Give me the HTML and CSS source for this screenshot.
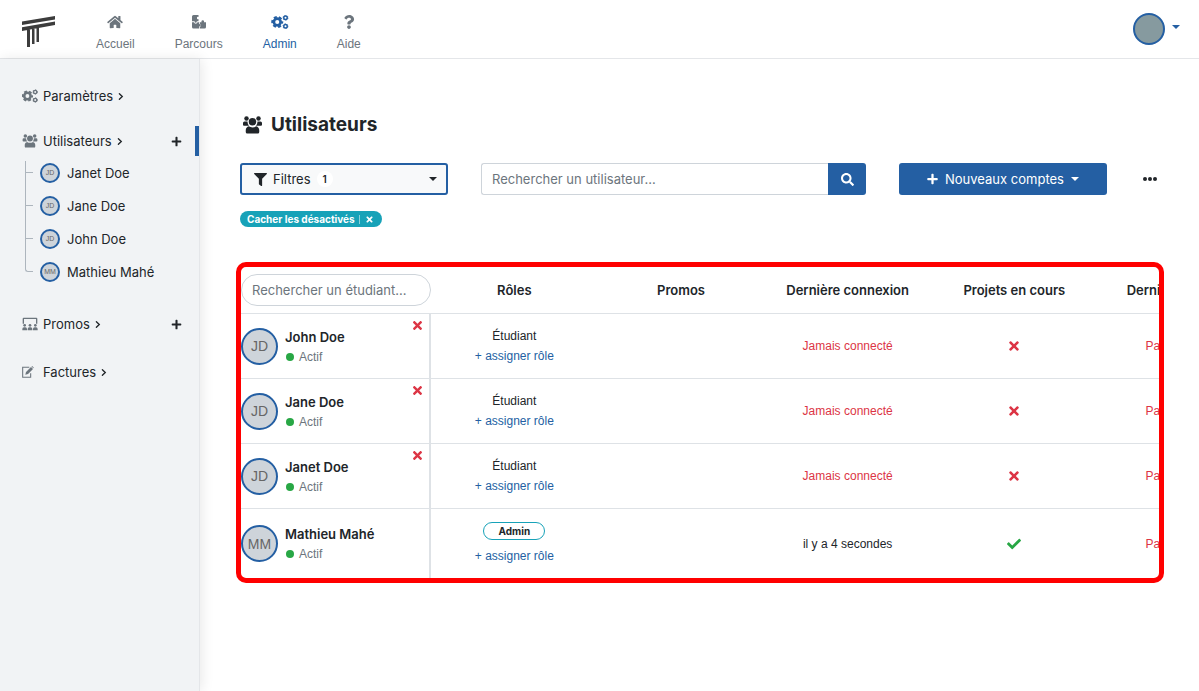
FILE: index.html
```html
<!DOCTYPE html>
<html lang="fr">
<head>
<meta charset="utf-8">
<meta name="viewport" content="width=device-width, initial-scale=1">
<title>Utilisateurs</title>
<link rel="stylesheet" href="styles.css">
</head>
<body>
<svg class="sprite" aria-hidden="true">
  <symbol id="home" viewBox="0 0 576 512"><path d="M280.37 148.26L96 300.11V464a16 16 0 0 0 16 16l112.06-.29a16 16 0 0 0 15.92-16V368a16 16 0 0 1 16-16h64a16 16 0 0 1 16 16v95.64a16 16 0 0 0 16 16.05L464 480a16 16 0 0 0 16-16V300L295.67 148.26a12.19 12.19 0 0 0-15.3 0zM571.6 251.47L488 182.56V44.05a12 12 0 0 0-12-12h-56a12 12 0 0 0-12 12v72.61L318.47 43a48 48 0 0 0-61 0L4.34 251.47a12 12 0 0 0-1.6 16.9l25.5 31A12 12 0 0 0 45.15 301l235.22-193.74a12.19 12.19 0 0 1 15.3 0L530.9 301a12 12 0 0 0 16.9-1.6l25.5-31a12 12 0 0 0-1.7-16.93z"/></symbol>
  <symbol id="puzzle" viewBox="0 0 28 28"><path d="M3 0h10v4a2.200 2.200 0 1 0 0 4v4.500H9.500a2.200 2.200 0 1 1-4.200 0H0V3a3 3 0 0 1 3-3z"/><path d="M0 14.500h4a3.600 3.600 0 0 0 7 0h3v4a2.300 2.300 0 1 1 0 4V27H3a3 3 0 0 1-3-3z"/><path d="M15.500 14.500h3.700a2.700 2.700 0 1 1 4.600 0H28V24a3 3 0 0 1-3 3h-9.500v-3a3.600 3.600 0 0 0 0-6.500z"/></symbol>
  <symbol id="cogs" viewBox="0 0 34 28"><g fill="none" stroke="currentColor"><circle cx="11.500" cy="14" r="6.800" stroke-width="5.400"/><circle cx="11.500" cy="14" r="10" stroke-width="4" stroke-dasharray="6 4.470" stroke-dashoffset="3"/><circle cx="28" cy="5.500" r="3.500" stroke-width="3"/><circle cx="28" cy="5.500" r="5" stroke-width="1.500" stroke-dasharray="2.600 2.630"/><circle cx="28" cy="22.500" r="3.500" stroke-width="3"/><circle cx="28" cy="22.500" r="5" stroke-width="1.500" stroke-dasharray="2.600 2.630"/></g></symbol>
  <symbol id="question" viewBox="0 0 384 512"><path d="M202.021 0C122.202 0 70.503 32.703 29.914 91.026c-7.363 10.58-5.093 25.086 5.178 32.874l43.138 32.709c10.373 7.865 25.132 6.026 33.253-4.148 25.049-31.381 43.63-49.449 82.757-49.449 30.764 0 68.816 19.799 68.816 49.631 0 22.552-18.617 34.134-48.993 51.164-35.423 19.86-82.299 44.576-82.299 106.405V320c0 13.255 10.745 24 24 24h72.471c13.255 0 24-10.745 24-24v-5.773c0-42.86 125.268-44.645 125.268-160.627C377.504 66.256 286.902 0 202.021 0zM192 373.459c-38.196 0-69.271 31.075-69.271 69.271 0 38.195 31.075 69.27 69.271 69.27s69.271-31.075 69.271-69.271-31.075-69.27-69.271-69.27z"/></symbol>
  <symbol id="times" viewBox="0 0 352 512"><path d="M242.72 256l100.07-100.07c12.28-12.28 12.28-32.19 0-44.48l-22.24-22.24c-12.28-12.28-32.19-12.28-44.48 0L176 189.28 75.93 89.21c-12.28-12.28-32.19-12.28-44.48 0L9.21 111.45c-12.28 12.28-12.28 32.19 0 44.48L109.28 256 9.21 356.07c-12.28 12.28-12.28 32.19 0 44.48l22.24 22.24c12.28 12.28 32.2 12.28 44.48 0L176 322.72l100.07 100.07c12.28 12.28 32.2 12.28 44.48 0l22.24-22.24c12.28-12.28 12.28-32.19 0-44.48L242.72 256z"/></symbol>
  <symbol id="check" viewBox="0 0 512 512"><path d="M173.898 439.404l-166.4-166.4c-9.997-9.997-9.997-26.206 0-36.204l36.203-36.204c9.997-9.998 26.207-9.998 36.204 0L192 312.69 432.095 72.596c9.997-9.997 26.207-9.997 36.204 0l36.203 36.204c9.997 9.997 9.997 26.206 0 36.204l-294.4 294.401c-9.998 9.997-26.207 9.997-36.204-.001z"/></symbol>
  <symbol id="plus" viewBox="0 0 448 512"><path d="M416 208H272V64c0-17.67-14.33-32-32-32h-32c-17.67 0-32 14.33-32 32v144H32c-17.67 0-32 14.33-32 32v32c0 17.67 14.33 32 32 32h144v144c0 17.67 14.33 32 32 32h32c17.67 0 32-14.33 32-32V304h144c17.67 0 32-14.33 32-32v-32c0-17.67-14.33-32-32-32z"/></symbol>
  <symbol id="search" viewBox="0 0 512 512"><path d="M505 442.7L405.3 343c-4.5-4.5-10.6-7-17-7H372c27.6-35.3 44-79.7 44-128C416 93.1 322.9 0 208 0S0 93.1 0 208s93.1 208 208 208c48.3 0 92.7-16.4 128-44v16.3c0 6.4 2.5 12.5 7 17l99.7 99.7c9.4 9.4 24.6 9.4 33.9 0l28.3-28.3c9.4-9.4 9.4-24.6.1-34zM208 336c-70.7 0-128-57.2-128-128 0-70.7 57.2-128 128-128 70.7 0 128 57.2 128 128 0 70.7-57.2 128-128 128z"/></symbol>
  <symbol id="filter" viewBox="0 0 512 512"><path d="M487.976 0H24.028C2.71 0-8.047 25.866 7.058 40.971L192 225.941V432c0 7.831 3.821 15.17 10.237 19.662l80 55.98C298.02 518.69 320 507.493 320 487.98V225.941l184.947-184.97C520.021 25.896 509.338 0 487.976 0z"/></symbol>
  <symbol id="users" viewBox="0 0 38 36"><circle cx="7" cy="5" r="4.500"/><circle cx="31" cy="5" r="4.500"/><circle cx="19" cy="11.500" r="7.500"/><path d="M3 11h6a12 12 0 0 0 3 8.500H2a2 2 0 0 1-2-2V14a3 3 0 0 1 3-3zM35 11h-6a12 12 0 0 1-3 8.500h10a2 2 0 0 0 2-2V14a3 3 0 0 0-3-3zM11.500 20.500c4 3 11 3 15 0 3.500 1 6 4 6 8V32a3 3 0 0 1-3 3h-21a3 3 0 0 1-3-3v-3.500c0-4 2.500-7 6-8z"/></symbol>
  <symbol id="class" viewBox="0 0 48 38"><path d="M2 18V3a3 3 0 0 1 3-3h38a3 3 0 0 1 3 3v15h-4V4H6v14z"/><circle cx="8" cy="23" r="4"/><circle cx="24" cy="23" r="4"/><circle cx="40" cy="23" r="4"/><path d="M1 38v-4a5 5 0 0 1 5-5h4a5 5 0 0 1 5 5v4zM17 38v-4a5 5 0 0 1 5-5h4a5 5 0 0 1 5 5v4zM33 38v-4a5 5 0 0 1 5-5h4a5 5 0 0 1 5 5v4z"/></symbol>
  <symbol id="edit" viewBox="0 0 36 36"><path d="M22 4H2v30h24V22" fill="none" stroke="currentColor" stroke-width="3.200"/><path d="M10 26l2-8L27 3l6 6-15 15zM28.500 1.500l2-1.500 5 5-1.500 2z"/></symbol>
  <symbol id="angle" viewBox="0 0 6 10"><path d="M1.200 2L4.400 5 1.200 8" fill="none" stroke="currentColor" stroke-width="1.500" stroke-linecap="round"/></symbol>
  <symbol id="dots" viewBox="0 0 14 4"><circle cx="2" cy="2" r="2"/><circle cx="7" cy="2" r="2"/><circle cx="12" cy="2" r="2"/></symbol>
</svg>

<header class="topbar">
  <a class="logo" href="#" aria-label="Page d’accueil">
    <svg viewBox="0 0 34 32" width="34" height="32"><path d="M0 6.500L33 1v3.500L0 10zM0 12.300L33 6.500v3.500L0 16zM5 14.500h3V32H5zM10 14h2.500v15H10zM14.500 13h2.500v14h-2.500z"/></svg>
  </a>
  <nav class="topnav" aria-label="Navigation principale">
    <a href="#"><svg class="ic"><use href="#home"/></svg>Accueil</a>
    <a href="#"><svg class="ic"><use href="#puzzle"/></svg>Parcours</a>
    <a href="#" class="current" aria-current="page"><svg class="ic"><use href="#cogs"/></svg>Admin</a>
    <a href="#"><svg class="ic"><use href="#question"/></svg>Aide</a>
  </nav>
  <button class="account" type="button" aria-label="Mon compte"><span class="avatar photo"></span><span class="caret"></span></button>
</header>

<div class="shell">
  <aside class="sidebar">
    <div class="entry"><a href="#"><svg class="ic"><use href="#cogs"/></svg>Paramètres<svg class="chev"><use href="#angle"/></svg></a></div>
    <div class="entry active"><a href="#"><svg class="ic"><use href="#users"/></svg>Utilisateurs<svg class="chev"><use href="#angle"/></svg></a><button class="add" type="button" aria-label="Ajouter un utilisateur"><svg><use href="#plus"/></svg></button></div>
    <ul class="tree">
      <li><a href="#"><span class="avatar small">JD</span>Janet Doe</a></li>
      <li><a href="#"><span class="avatar small">JD</span>Jane Doe</a></li>
      <li><a href="#"><span class="avatar small">JD</span>John Doe</a></li>
      <li><a href="#"><span class="avatar small">MM</span>Mathieu Mahé</a></li>
    </ul>
    <div class="entry"><a href="#"><svg class="ic"><use href="#class"/></svg>Promos<svg class="chev"><use href="#angle"/></svg></a><button class="add" type="button" aria-label="Ajouter une promo"><svg><use href="#plus"/></svg></button></div>
    <div class="entry"><a href="#"><svg class="ic edit"><use href="#edit"/></svg>Factures<svg class="chev"><use href="#angle"/></svg></a></div>
  </aside>

  <main class="main">
    <h1><svg><use href="#users"/></svg>Utilisateurs</h1>
    <div class="tools">
      <button class="filter" type="button"><svg><use href="#filter"/></svg>Filtres<span class="count">1</span><span class="caret"></span></button>
      <form class="search">
        <input type="search" aria-label="Rechercher un utilisateur" placeholder="Rechercher un utilisateur...">
        <button type="button" aria-label="Rechercher"><svg><use href="#search"/></svg></button>
      </form>
      <button class="create" type="button"><svg><use href="#plus"/></svg>Nouveaux comptes<span class="caret"></span></button>
      <button class="more" type="button" aria-label="Plus d’actions"><svg><use href="#dots"/></svg></button>
    </div>
    <div class="chips">
      <span class="chip">Cacher les désactivés<button type="button" aria-label="Retirer le filtre"><svg><use href="#times"/></svg></button></span>
    </div>

    <div class="frame">
      <table class="users">
        <thead>
          <tr>
            <th class="who"><input type="text" aria-label="Rechercher un étudiant" placeholder="Rechercher un étudiant..."></th>
            <th>Rôles</th><th>Promos</th><th>Dernière connexion</th><th>Projets en cours</th><th>Dernier paiement</th><th></th>
          </tr>
        </thead>
        <tbody>
          <tr>
            <td class="who"><div class="person"><span class="avatar large">JD</span><div><a href="#" class="name">John Doe</a><div class="status">Actif</div></div><button class="remove" type="button" aria-label="Retirer John Doe"><svg><use href="#times"/></svg></button></div></td>
            <td><div class="role">Étudiant</div><a href="#" class="assign">+ assigner rôle</a></td><td></td>
            <td class="bad">Jamais connecté</td><td class="bad"><svg class="mark" role="img" aria-label="Non"><use href="#times"/></svg></td><td class="bad">Pas de projet</td><td></td>
          </tr>
          <tr>
            <td class="who"><div class="person"><span class="avatar large">JD</span><div><a href="#" class="name">Jane Doe</a><div class="status">Actif</div></div><button class="remove" type="button" aria-label="Retirer Jane Doe"><svg><use href="#times"/></svg></button></div></td>
            <td><div class="role">Étudiant</div><a href="#" class="assign">+ assigner rôle</a></td><td></td>
            <td class="bad">Jamais connecté</td><td class="bad"><svg class="mark" role="img" aria-label="Non"><use href="#times"/></svg></td><td class="bad">Pas de projet</td><td></td>
          </tr>
          <tr>
            <td class="who"><div class="person"><span class="avatar large">JD</span><div><a href="#" class="name">Janet Doe</a><div class="status">Actif</div></div><button class="remove" type="button" aria-label="Retirer Janet Doe"><svg><use href="#times"/></svg></button></div></td>
            <td><div class="role">Étudiant</div><a href="#" class="assign">+ assigner rôle</a></td><td></td>
            <td class="bad">Jamais connecté</td><td class="bad"><svg class="mark" role="img" aria-label="Non"><use href="#times"/></svg></td><td class="bad">Pas de projet</td><td></td>
          </tr>
          <tr class="admin">
            <td class="who"><div class="person"><span class="avatar large">MM</span><div><a href="#" class="name">Mathieu Mahé</a><div class="status">Actif</div></div></div></td>
            <td><div class="role badge">Admin</div><a href="#" class="assign">+ assigner rôle</a></td><td></td>
            <td>il y a 4 secondes</td><td class="good"><svg class="mark" role="img" aria-label="Oui"><use href="#check"/></svg></td><td class="bad">Pas de projet</td><td></td>
          </tr>
        </tbody>
      </table>
    </div>
  </main>
</div>
</body>
</html>
```
FILE: styles.css
```css
*, *::before, *::after { box-sizing: border-box; }

:root {
  --blue: #245fa3;
  --ink: #212529;
  --muted: #6c757d;
  --line: #dee2e6;
  --red: #dc3545;
  --green: #28a745;
  --teal: #17a2b8;
  --small: "Liberation Sans", Arial, sans-serif;
}

body {
  margin: 0;
  min-height: 100vh;
  display: flex;
  flex-direction: column;
  font: 13px/20px Inter, "Liberation Sans", sans-serif;
  color: var(--ink);
  background: #fff;
}

a { color: inherit; text-decoration: none; }
button, input { font: inherit; color: inherit; margin: 0; }
button { padding: 0; border: 0; background: none; cursor: pointer; }
svg { display: block; fill: currentColor; flex: none; }
.sprite { position: absolute; width: 0; height: 0; }

.caret {
  border: 4px solid transparent;
  border-top-color: currentColor;
  border-bottom: 0;
}

.avatar {
  display: flex;
  flex: none;
  align-items: center;
  justify-content: center;
  border: 2px solid var(--blue);
  border-radius: 50%;
  background: #ced4da;
  color: #666;
  font-family: var(--small);
}
.avatar.photo { width: 32px; height: 32px; background: #869a9f; }
.avatar.small { width: 20px; height: 20px; font-size: 7px; line-height: 8px; }
.avatar.large { width: 37px; height: 37px; font-size: 14px; }

/* Top bar */
.topbar {
  display: flex;
  align-items: center;
  height: 59px;
  padding: 0 19px 0 22px;
  border-bottom: 1px solid #e4e6e9;
}
.logo { color: #3c3c3c; margin-top: 4px; }
.topnav { display: flex; gap: 40px; margin-left: 40px; padding-top: 8px; }
.topnav a {
  display: flex;
  flex-direction: column;
  align-items: center;
  gap: 7px;
  font-family: var(--small);
  font-size: 12px;
  line-height: 16px;
  color: var(--muted);
}
.topnav a.current { color: var(--blue); }
.topnav .ic { width: 18px; height: 14px; }
.account { display: flex; align-items: center; gap: 7px; margin-left: auto; color: var(--blue); }
.account .caret { margin-bottom: 4px; }

/* Sidebar */
.shell { flex: 1; display: flex; }
.sidebar {
  flex: none;
  width: 200px;
  padding-top: 22px;
  background: #f1f3f5;
  border-right: 1px solid #e4e6e9;
  box-shadow: 2px 0 12px rgba(0, 0, 0, .09);
  font-size: 13px;
}
.entry {
  display: flex;
  align-items: center;
  justify-content: space-between;
  height: 30px;
  margin-bottom: 18px;
  padding: 0 13px 0 22px;
  border-right: 4px solid transparent;
}
.entry:first-child { margin-bottom: 15px; }
.entry.active { margin-bottom: 0; border-right-color: var(--blue); }
.entry a { display: flex; align-items: center; gap: 5px; }
.entry .ic { width: 16px; height: 14px; color: var(--muted); }
.entry .ic.edit { height: 12px; width: 12px; margin-right: 4px; }
.chev { width: 6px; height: 9px; }
.add svg { width: 11px; height: 11px; }
.tree { list-style: none; margin: 0 0 21px; padding: 0 0 0 25px; }
.tree li { position: relative; height: 33px; display: flex; align-items: center; padding-left: 15px; }
.tree li::before {
  content: "";
  position: absolute;
  left: 0;
  top: 0;
  width: 8px;
  height: 17px;
  border: solid #adb5bd;
  border-width: 0 0 1px 1px;
}
.tree li:first-child::before { top: 5px; height: 12px; }
.tree li:not(:last-child)::after {
  content: "";
  position: absolute;
  left: 0;
  top: 5px;
  bottom: 0;
  border-left: 1px solid #adb5bd;
}
.tree li:last-child::before { border-bottom-left-radius: 3px; }
.tree a { display: flex; align-items: center; gap: 7px; }

/* Main area */
.main { flex: 1; min-width: 0; padding: 52px 39px 40px 40px; }
h1 {
  display: flex;
  align-items: center;
  gap: 9px;
  margin: 0 0 24px;
  padding-left: 3px;
  font-size: 19px;
  line-height: 28px;
  font-weight: 700;
}
h1 svg { width: 19px; height: 18px; }

.tools {
  display: grid;
  grid-template-columns: 208fr 385fr 208fr 20px;
  gap: 33px;
  align-items: center;
}
.tools > button, .search { height: 32px; }
.filter {
  display: flex;
  align-items: center;
  gap: 6px;
  padding: 0 9px 0 12px;
  border: 2px solid var(--blue);
  border-radius: 3px;
  background: #f8f9fa;
}
.filter svg { width: 13px; height: 13px; }
.count {
  width: 16px;
  border-radius: 8px;
  background: #fff;
  font-size: 10px;
  line-height: 16px;
  font-weight: 600;
}
.filter .caret { margin-left: auto; }
.search { display: flex; }
.search input {
  flex: 1;
  min-width: 0;
  padding: 0 10px;
  border: 1px solid #ced4da;
  border-right: 0;
  border-radius: 3px 0 0 3px;
  outline: 0;
}
input::placeholder { color: var(--muted); opacity: 1; }
.search button {
  display: grid;
  place-items: center;
  width: 38px;
  border-radius: 0 3px 3px 0;
  background: var(--blue);
  color: #fff;
}
.search svg { width: 13px; height: 13px; }
.create {
  display: flex;
  align-items: center;
  justify-content: center;
  gap: 7px;
  border-radius: 3px;
  background: var(--blue);
  color: #fff;
}
.create svg { width: 11px; height: 12px; }
.more { display: grid; place-items: center; }
.more svg { width: 14px; height: 4px; }

.chips { display: flex; margin: 16px 0 35px; }
.chip {
  display: flex;
  align-items: center;
  gap: 4px;
  padding: 0 9px 0 7px;
  border-radius: 8px;
  background: var(--teal);
  color: #fff;
  font-size: 10px;
  line-height: 16px;
  font-weight: 700;
}
.chip button { padding-left: 6px; border-left: 1px solid #8bd0db; }
.chip svg { width: 7px; height: 9px; }

/* Users table */
.frame {
  margin: 0 -4px;
  border: 5px solid red;
  border-radius: 10px;
  overflow-x: auto;
  scrollbar-width: none;
}
.users { width: 1190px; table-layout: fixed; border-collapse: separate; border-spacing: 0; }
.users th, .users td { padding: 0; text-align: center; white-space: nowrap; }
.users th { height: 47px; font-weight: 600; border-bottom: 1px solid var(--line); }
.users td { height: 65px; font-family: var(--small); font-size: 12px; border-bottom: 1px solid var(--line); }
.users tr.admin td { height: 69px; border-bottom: 0; }
.users .who { width: 190px; text-align: left; }
.users td.who { border-right: 2px solid var(--line); }
.who input {
  display: block;
  width: 100%;
  height: 32px;
  padding: 0 10px;
  border: 1px solid #ced4da;
  border-radius: 16px;
  outline: 0;
  font-weight: 400;
}
.person { position: relative; height: 64px; display: flex; align-items: center; gap: 7px; }
.name { font-family: Inter, sans-serif; font-size: 13px; font-weight: 600; line-height: 20px; }
.status { display: flex; align-items: center; gap: 5px; padding-left: 1px; line-height: 18px; color: var(--muted); }
.status::before { content: ""; width: 8px; height: 8px; border-radius: 50%; background: var(--green); }
.remove { position: absolute; top: 5px; right: 7px; color: var(--red); }
.remove svg { width: 9px; height: 13px; }
.role { line-height: 20px; }
.role.badge {
  width: 62px;
  margin: 0 auto 6px;
  border: 1px solid var(--teal);
  border-radius: 9px;
  font-family: Inter, sans-serif;
  font-size: 10px;
  line-height: 16px;
  font-weight: 700;
}
.assign { color: var(--blue); }
.bad { color: var(--red); }
.good { color: var(--green); }
.mark { width: 14px; height: 14px; margin: 0 auto; }
```
